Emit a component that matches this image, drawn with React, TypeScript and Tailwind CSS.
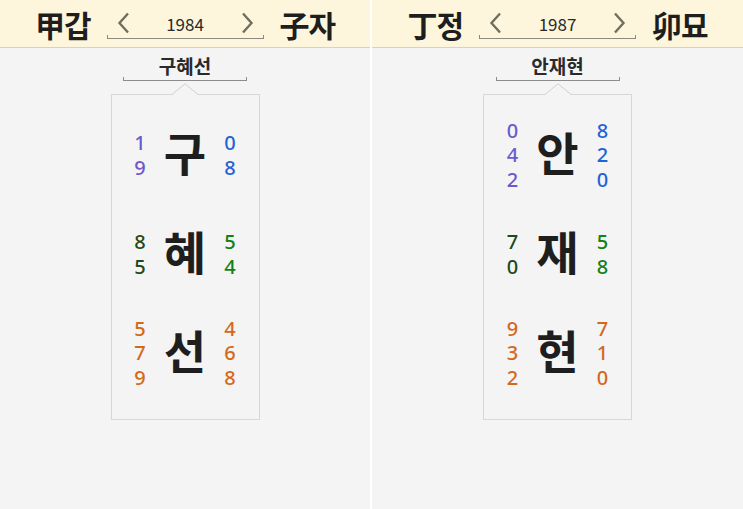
import React from "react";

type Row = { ch: string; left: string[]; right: string[]; lc: string; rc: string };
type PanelData = {
  a: string;
  year: string;
  b: string;
  name: string;
  rows: Row[];
};

const PURPLE = "text-[#6a5acd]";
const BLUE = "text-[#1f63d8]";
const DGREEN = "text-[#1c4a1c]";
const GREEN = "text-[#128212]";
const ORANGE = "text-[#d2691e]";

const panels: PanelData[] = [
  {
    a: "甲갑",
    year: "1984",
    b: "子자",
    name: "구혜선",
    rows: [
      { ch: "구", left: ["1", "9"], right: ["0", "8"], lc: PURPLE, rc: BLUE },
      { ch: "혜", left: ["8", "5"], right: ["5", "4"], lc: DGREEN, rc: GREEN },
      { ch: "선", left: ["5", "7", "9"], right: ["4", "6", "8"], lc: ORANGE, rc: ORANGE },
    ],
  },
  {
    a: "丁정",
    year: "1987",
    b: "卯묘",
    name: "안재현",
    rows: [
      { ch: "안", left: ["0", "4", "2"], right: ["8", "2", "0"], lc: PURPLE, rc: BLUE },
      { ch: "재", left: ["7", "0"], right: ["5", "8"], lc: DGREEN, rc: GREEN },
      { ch: "현", left: ["9", "3", "2"], right: ["7", "1", "0"], lc: ORANGE, rc: ORANGE },
    ],
  },
];

const Chevron = ({ dir }: { dir: "l" | "r" }) => (
  <svg width="13" height="22" viewBox="0 0 13 22">
    <polyline
      points={dir === "l" ? "11,1.5 2.5,11 11,20.5" : "2,1.5 10.5,11 2,20.5"}
      fill="none"
      stroke="#6f6f60"
      strokeWidth="2.4"
    />
  </svg>
);

const Digits = ({ list, color }: { list: string[]; color: string }) => (
  <div className={`flex w-[20px] flex-col items-center ${color}`}>
    {list.map((n, j) => (
      <div
        key={j}
        className="h-[24.5px] overflow-visible text-[20px] font-medium leading-[24.5px]"
        style={{ fontFamily: '"Noto Sans", sans-serif' }}
      >
        {n}
      </div>
    ))}
  </div>
);

const Panel = ({ d, w }: { d: PanelData; w: string }) => (
  <div className={`flex flex-col items-center bg-[#f4f4f4] ${w}`}>
    <div className="flex h-[48px] w-full items-center justify-center gap-[16px] border-b border-[#d9d3bc] bg-[#fdf6dc]">
      <div className="text-[30px] font-bold leading-none tracking-[-1px] text-[#1e1e1e]">{d.a}</div>
      <div className="mt-[4px] flex w-[157px] flex-col">
        <div className="flex h-[22px] items-center justify-between px-[10px]">
          <Chevron dir="l" />
          <span className="text-[17px] leading-none text-[#2a2a2a]">{d.year}</span>
          <Chevron dir="r" />
        </div>
        <div className="mt-[1px] h-[4px] border-x border-b border-[#8a8a80]" />
      </div>
      <div className="text-[30px] font-bold leading-none tracking-[-1px] text-[#1e1e1e]">{d.b}</div>
    </div>
    <div className="mt-[7px] text-[19px] font-bold leading-[22px] text-[#2a2a2a]">{d.name}</div>
    <div className="h-[4px] w-[124px] border-x border-b border-[#8c8c8c]" />
    <div className="relative mt-[13px] h-[326px] w-[149px] border border-[#d7d7d7] bg-[#f4f4f4] pt-[11px]">
      <svg
        className="absolute left-1/2 top-[-12px] -translate-x-1/2"
        width="26"
        height="12"
        viewBox="0 0 26 12"
      >
        <polygon points="0,12 13,1 26,12" fill="#f4f4f4" />
        <polyline points="0,11.5 13,0.8 26,11.5" fill="none" stroke="#d0d0d0" strokeWidth="1" />
      </svg>
      {d.rows.map((r, i) => (
        <div key={i} className="flex h-[99px] items-center justify-center gap-[9px]">
          <Digits list={r.left} color={r.lc} />
          <div className="mb-[10px] w-[52px] text-center text-[46px] font-bold leading-none text-[#1e1e1e]">
            {r.ch}
          </div>
          <Digits list={r.right} color={r.rc} />
        </div>
      ))}
    </div>
  </div>
);

export default function App() {
  return (
    <div
      className="flex h-[509px] w-[743px] overflow-hidden bg-white"
      style={{ fontFamily: '"Noto Sans CJK KR", "Noto Sans", sans-serif' }}
    >
      <Panel d={panels[0]} w="w-[370px] h-full" />
      <div className="w-[2px] bg-white" />
      <Panel d={panels[1]} w="w-[371px] h-full" />
    </div>
  );
}
